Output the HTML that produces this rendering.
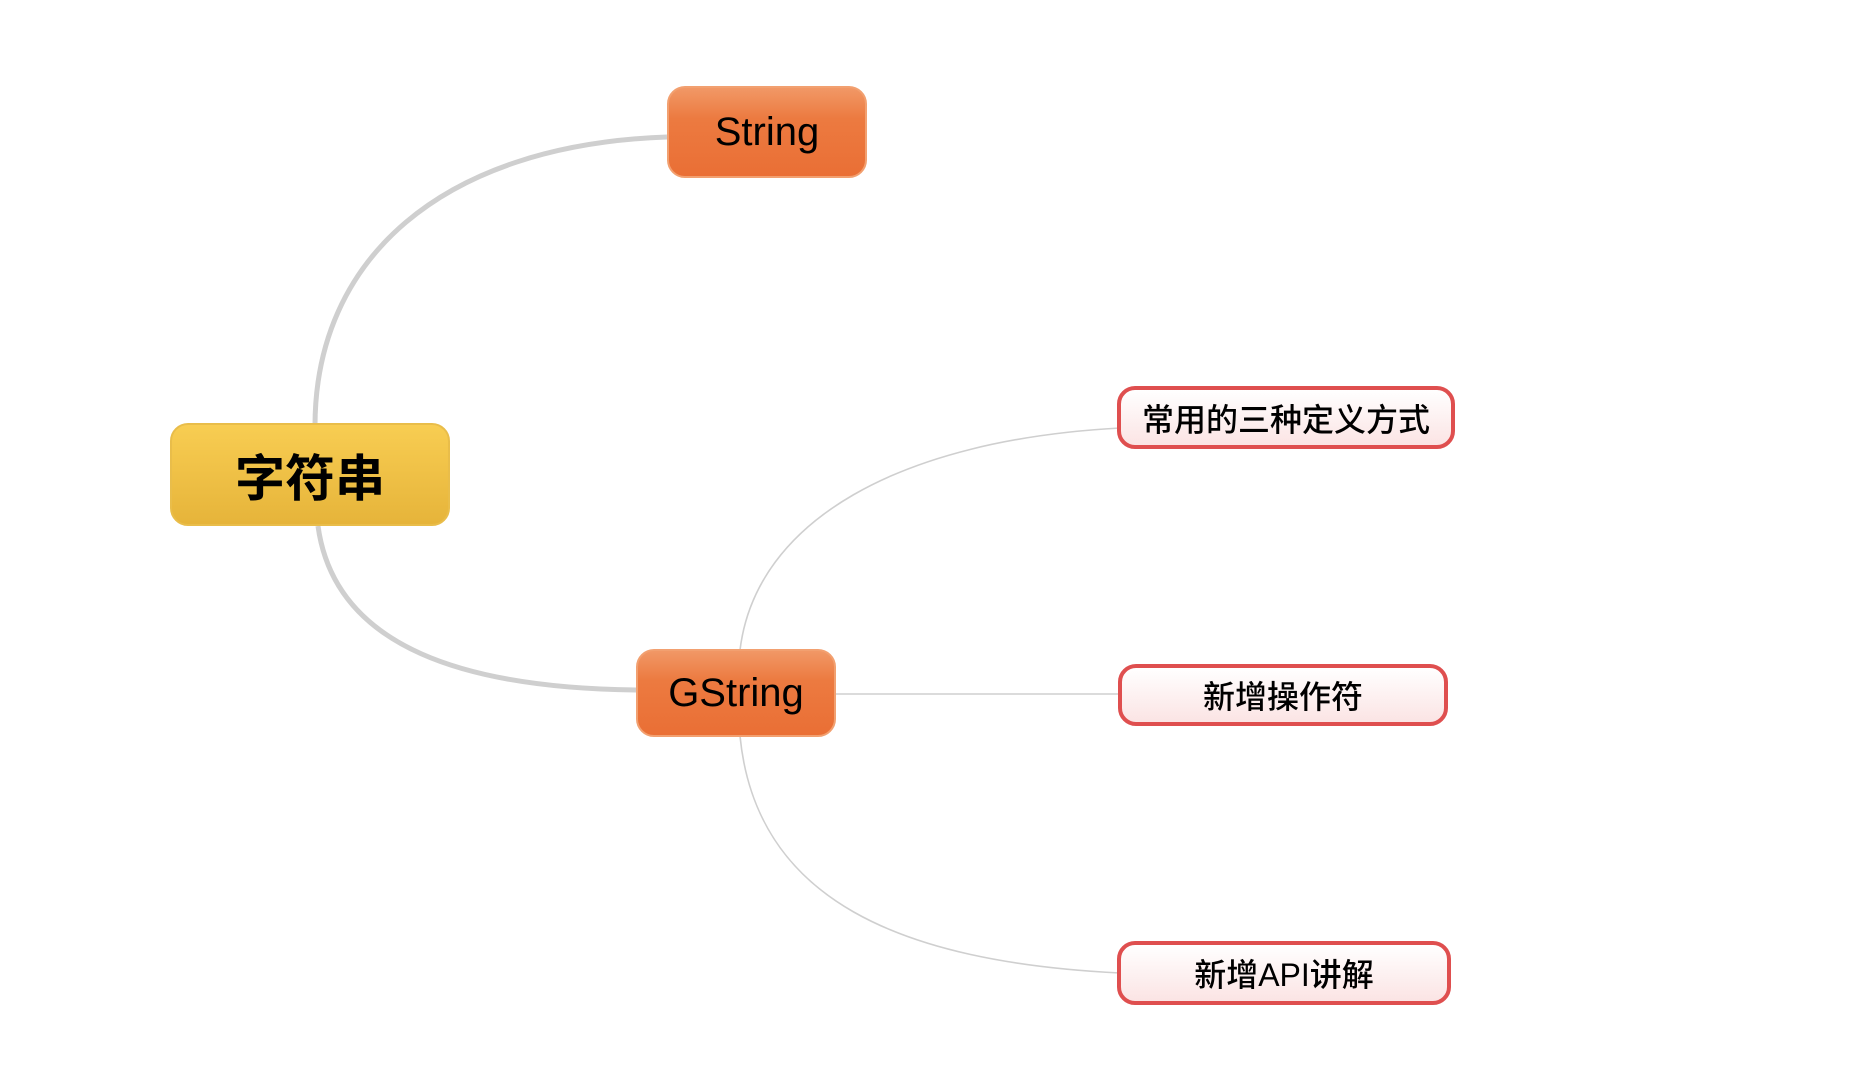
<!DOCTYPE html>
<html><head><meta charset="utf-8"><style>
html,body{margin:0;padding:0;background:#fff;width:1852px;height:1084px;overflow:hidden;position:relative;font-family:"Liberation Sans","Noto Sans CJK SC",sans-serif;}
.n{position:absolute;box-sizing:border-box;display:flex;align-items:center;justify-content:center;color:#000;}
.o{background:linear-gradient(#f19866,#ec7a40 35%,#ea6f35);border:2px solid #f2a070;border-radius:18px;font-size:40px;}
.y{background:linear-gradient(#f8cd52,#e6b43a);border:2px solid #e9bd4a;border-radius:18px;font-size:50px;font-weight:bold;}
.l{background:linear-gradient(#fff,#fbe4e4);border:4px solid #df4f4f;border-radius:18px;font-size:32px;font-weight:500;}
svg{position:absolute;left:0;top:0}
</style></head><body>
<svg width="1852" height="1084">
<g fill="none" stroke="#cfcfcf">
<path d="M315 426 C315 260 440 145 667 137" stroke-width="5"/>
<path d="M318 526 C335 650 470 688 636 690" stroke-width="5"/>
<path d="M740 650 C756 520 900 440 1120 428" stroke-width="1.6"/>
<path d="M836 694 L1120 694" stroke-width="1.6"/>
<path d="M740 736 C756 900 900 962 1120 973" stroke-width="1.6"/>
</g></svg>
<div class="n y" style="left:170px;top:423px;width:280px;height:103px">字符串</div>
<div class="n o" style="left:667px;top:86px;width:200px;height:92px">String</div>
<div class="n o" style="left:636px;top:649px;width:200px;height:88px">GString</div>
<div class="n l" style="left:1117px;top:386px;width:338px;height:63px">常用的三种定义方式</div>
<div class="n l" style="left:1118px;top:664px;width:330px;height:62px">新增操作符</div>
<div class="n l" style="left:1117px;top:941px;width:334px;height:64px">新增API讲解</div>
</body></html>
